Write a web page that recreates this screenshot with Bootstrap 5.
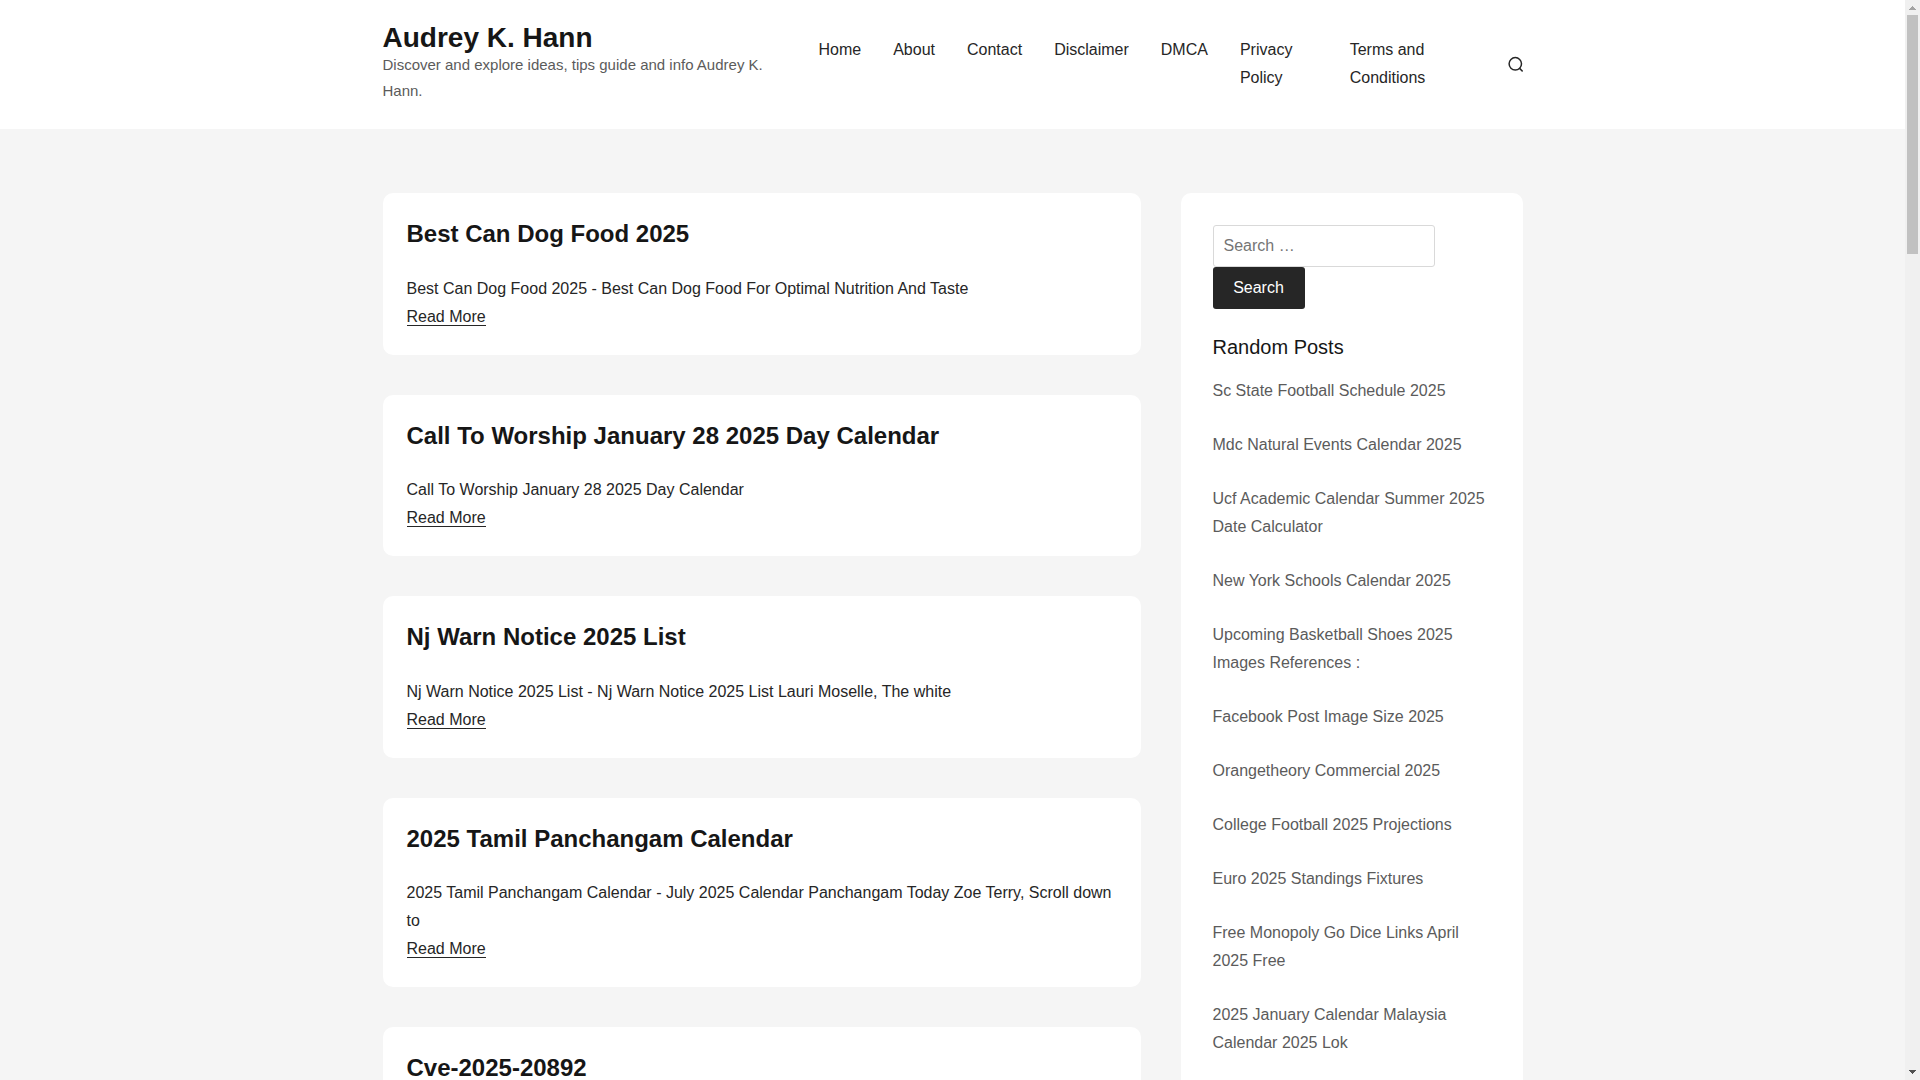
<!DOCTYPE html>
<html lang="en">
<head>
<meta charset="utf-8">
<meta name="viewport" content="width=device-width, initial-scale=1">
<title>Audrey K. Hann</title>
<link href="https://cdn.jsdelivr.net/npm/bootstrap@5.3.0/dist/css/bootstrap.min.css" rel="stylesheet">
<style>
body{font-family:"Liberation Sans",Arial,sans-serif;font-size:16px;line-height:28px;color:#262626;background:#f5f5f5}
a{color:inherit;text-decoration:none}
.shell{max-width:1140px}
.site-head{padding:24px 0 25px}
.site-brand{flex:0 1 404px}
.site-title{font-size:28px;line-height:28px;font-weight:700;color:#161616}
.site-tag{font-size:15px;line-height:26px;color:#5b5b5b}
.site-nav{flex:1 1 0;min-width:0;padding-right:36px}
.site-nav li{margin-left:32px}
.icon-btn{width:16px;height:28px}
.site-main{padding-top:64px}
.posts{flex:1 1 0;min-width:0;gap:40px}
.panel{background:#fff;border-radius:10px}
.post{padding:24px}
.post h2{font-size:24px;line-height:1.4;font-weight:700;color:#161616;margin-bottom:24px}
.more{border-bottom:1px solid #262626}
.side{flex:0 0 30%;margin-left:40px;padding:32px}
.search-box{width:222px;height:42px;border:1px solid #d9d9d9;border-radius:3px;padding:0 10px;color:#262626}
.search-box::placeholder{color:#757575}
.search-btn{height:42px;width:92px;border-radius:3px;background:#262626;color:#fff;padding:0;line-height:28px}
.search-btn:hover{background:#404040;color:#fff}
.side h2{font-size:20px;line-height:28px;color:#161616;margin:24px 0 16px}
.side ul{color:#5b5b5b;gap:26px}
.track{flex:0 0 15px;background:#f0f0f0}
.track svg{display:block;width:15px;height:15px}
.thumb{width:11px;height:239px;margin-left:2px;background:#c1c1c1}
</style>
</head>
<body>
<div class="d-flex vh-100 overflow-hidden">
<div class="flex-grow-1">
<header class="site-head bg-white">
<div class="shell mx-auto d-flex align-items-center">
<div class="site-brand">
<div class="site-title"><a href="#">Audrey K. Hann</a></div>
<p class="site-tag mb-0">Discover and explore ideas, tips guide and info Audrey K. Hann.</p>
</div>
<nav class="site-nav" aria-label="Primary">
<ul class="list-unstyled d-flex mb-0">
<li><a href="#">Home</a></li>
<li><a href="#">About</a></li>
<li><a href="#">Contact</a></li>
<li><a href="#">Disclaimer</a></li>
<li><a href="#">DMCA</a></li>
<li><a href="#">Privacy Policy</a></li>
<li><a href="#">Terms and Conditions</a></li>
</ul>
</nav>
<button type="button" class="icon-btn btn p-0 border-0 d-flex align-items-center" aria-label="Search">
<svg width="16" height="16" viewBox="0 0 16 16" fill="none" stroke="#262626" stroke-width="1.5"><circle cx="8.3" cy="7.8" r="6.2"/><path d="M12.4 12.1l3.3 3.3"/></svg>
</button>
</div>
</header>
<main class="site-main">
<div class="shell mx-auto d-flex align-items-start">
<div class="posts d-flex flex-column">
<article class="post panel"><h2><a href="#">Best Can Dog Food 2025</a></h2><p class="mb-0">Best Can Dog Food 2025 - Best Can Dog Food For Optimal Nutrition And Taste<br><a class="more" href="#">Read More</a></p></article>
<article class="post panel"><h2><a href="#">Call To Worship January 28 2025 Day Calendar</a></h2><p class="mb-0">Call To Worship January 28 2025 Day Calendar<br><a class="more" href="#">Read More</a></p></article>
<article class="post panel"><h2><a href="#">Nj Warn Notice 2025 List</a></h2><p class="mb-0">Nj Warn Notice 2025 List - Nj Warn Notice 2025 List Lauri Moselle, The white<br><a class="more" href="#">Read More</a></p></article>
<article class="post panel"><h2><a href="#">2025 Tamil Panchangam Calendar</a></h2><p class="mb-0">2025 Tamil Panchangam Calendar - July 2025 Calendar Panchangam Today Zoe Terry, Scroll down to<br><a class="more" href="#">Read More</a></p></article>
<article class="post panel"><h2><a href="#">Cve-2025-20892</a></h2></article>
</div>
<aside class="side panel">
<form role="search">
<label class="visually-hidden" for="q">Search for:</label>
<input class="search-box d-block" id="q" type="search" placeholder="Search …">
<button class="search-btn btn border-0" type="submit">Search</button>
</form>
<h2>Random Posts</h2>
<ul class="list-unstyled d-flex flex-column mb-0">
<li><a href="#">Sc State Football Schedule 2025</a></li>
<li><a href="#">Mdc Natural Events Calendar 2025</a></li>
<li><a href="#">Ucf Academic Calendar Summer 2025 Date Calculator</a></li>
<li><a href="#">New York Schools Calendar 2025</a></li>
<li><a href="#">Upcoming Basketball Shoes 2025 Images References :</a></li>
<li><a href="#">Facebook Post Image Size 2025</a></li>
<li><a href="#">Orangetheory Commercial 2025</a></li>
<li><a href="#">College Football 2025 Projections</a></li>
<li><a href="#">Euro 2025 Standings Fixtures</a></li>
<li><a href="#">Free Monopoly Go Dice Links April 2025 Free</a></li>
<li><a href="#">2025 January Calendar Malaysia Calendar 2025 Lok</a></li>
</ul>
</aside>
</div>
</main>
</div>
<div class="track d-flex flex-column" aria-hidden="true">
<svg viewBox="0 0 15 15" shape-rendering="crispEdges"><path fill="#a3a3a3" d="M4 10V9h1V8h1V7h1V6h1v1h1v1h1v1h1v1z"/></svg>
<div class="thumb"></div>
<svg class="mt-auto" viewBox="0 0 15 15" shape-rendering="crispEdges"><path fill="#505050" d="M4 5v1h1v1h1v1h1v1h1V8h1V7h1V6h1V5z"/></svg>
</div>
</div>
<script src="https://cdn.jsdelivr.net/npm/bootstrap@5.3.0/dist/js/bootstrap.bundle.min.js"></script>
</body>
</html>
